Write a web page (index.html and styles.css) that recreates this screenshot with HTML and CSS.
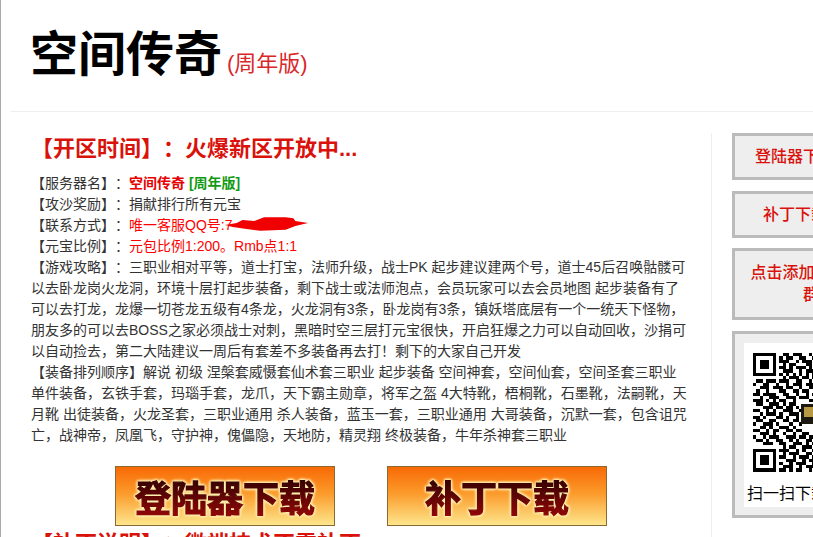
FILE: index.html
```html
<!DOCTYPE html>
<html lang="zh-CN">
<head>
    <meta charset="UTF-8">
    <meta name="viewport" content="width=device-width, initial-scale=1.0">
    <title>空间传奇(周年版)</title>
    <link rel="stylesheet" href="styles.css">
</head>
<body>
    <div class="page">
        <header class="top">
            <h1>空间传奇<small>(周年版)</small></h1>
        </header>

        <div class="columns">
            <main class="content">
                <h2>【开区时间】：火爆新区开放中...</h2>
                <p class="info">
                    【服务器名】：<b class="red">空间传奇</b> <b class="green">[周年版]</b><br>
                    【攻沙奖励】：捐献排行所有元宝<br>
                    【联系方式】：<span class="red">唯一客服QQ号:<span class="smear">7·········4<svg viewBox="0 0 86 14" width="84" height="14"><path d="M0 8 L12 6 L18 3 L30 4 L40 0 L62 0 L70 1 L72 4 L85 6 L72 9 L62 13 L36 14 L22 12 L8 10 Z" fill="#f00000"/></svg></span></span><br>
                    【元宝比例】：<span class="red">元包比例1:200。Rmb点1:1</span><br>
                    【游戏攻略】：三职业相对平等，道士打宝，法师升级，战士PK 起步建议建两个号，道士45后召唤骷髅可以去卧龙岗火龙洞，环境十层打起步装备，剩下战士或法师泡点，会员玩家可以去会员地图 起步装备有了可以去打龙，龙爆一切苍龙五级有4条龙，火龙洞有3条，卧龙岗有3条，镇妖塔底层有一个一统天下怪物，朋友多的可以去BOSS之家必须战士对刺，黑暗时空三层打元宝很快，开启狂爆之力可以自动回收，沙捐可以自动捡去，第二大陆建议一周后有套差不多装备再去打！剩下的大家自己开发<br>
                    【装备排列顺序】解说 初级 涅槃套威慑套仙术套三职业 起步装备 空间神套，空间仙套，空间圣套三职业 单件装备，玄铁手套，玛瑙手套，龙爪，天下霸主勋章，将军之盔 4大特靴，梧桐靴，石墨靴，法嗣靴，天月靴 出徒装备，火龙圣套，三职业通用 杀人装备，蓝玉一套，三职业通用 大哥装备，沉默一套，包含诅咒亡，战神帝，凤凰飞，守护神，傀儡隐，天地防，精灵翔 终极装备，牛年杀神套三职业
                </p>
                <div class="downloads">
                    <a class="dl-btn" href="#"><span>登陆器下载</span></a>
                    <a class="dl-btn" href="#"><span>补丁下载</span></a>
                </div>
                <h2 class="next">【补丁说明】：微端技术不需补丁</h2>
            </main>

            <aside class="side">
                <a class="side-card" href="#">登陆器下载地址</a>
                <a class="side-card" href="#">补丁下载地址</a>
                <a class="side-card tall" href="#">点击添加游戏QQ群</a>
                <div class="side-card qr-card">
                    <div class="qr">
                        <svg viewBox="0 0 37 37" width="122" height="122" shape-rendering="crispEdges">
                            <path fill="none" stroke="#000" stroke-width="1" d="M0 .5h7M9 .5h2M12 .5h3M17 .5h1M19 .5h3M0 1.5h1M6 1.5h1M8 1.5h1M10 1.5h2M14 1.5h2M18 1.5h3M0 2.5h1M2 2.5h3M6 2.5h1M8 2.5h3M13 2.5h1M15 2.5h3M20 2.5h2M0 3.5h1M2 3.5h3M6 3.5h1M9 3.5h1M11 3.5h2M16 3.5h2M19 3.5h2M0 4.5h1M2 4.5h3M6 4.5h1M8 4.5h2M11 4.5h1M13 4.5h3M17 4.5h1M20 4.5h2M0 5.5h1M6 5.5h1M9 5.5h3M14 5.5h1M16 5.5h3M0 6.5h7M8 6.5h1M10 6.5h1M12 6.5h1M14 6.5h1M16 6.5h1M18 6.5h1M20 6.5h1M9 7.5h1M11 7.5h3M15 7.5h2M18 7.5h3M1 8.5h2M4 8.5h3M8 8.5h3M13 8.5h2M17 8.5h1M19 8.5h2M0 9.5h1M3 9.5h2M7 9.5h1M10 9.5h1M12 9.5h3M16 9.5h3M2 10.5h3M6 10.5h3M10 10.5h2M14 10.5h1M17 10.5h2M20 10.5h1M1 11.5h1M4 11.5h1M8 11.5h2M12 11.5h2M15 11.5h2M19 11.5h2M0 12.5h2M3 12.5h4M9 12.5h2M13 12.5h1M16 12.5h1M18 12.5h1M2 13.5h1M5 13.5h3M10 13.5h3M14 13.5h3M19 13.5h2M0 14.5h3M4 14.5h1M6 14.5h1M8 14.5h2M12 14.5h1M17 14.5h2M1 15.5h2M5 15.5h3M9 15.5h1M11 15.5h2M3 16.5h3M7 16.5h2M10 16.5h2M13 16.5h1M0 17.5h2M4 17.5h1M6 17.5h1M9 17.5h3M14 17.5h1M2 18.5h1M4 18.5h3M8 18.5h1M11 18.5h3M0 19.5h2M3 19.5h1M7 19.5h2M10 19.5h1M13 19.5h1M1 20.5h2M5 20.5h2M9 20.5h2M12 20.5h2M0 21.5h1M3 21.5h3M7 21.5h1M11 21.5h1M14 21.5h1M2 22.5h2M5 22.5h1M8 22.5h3M12 22.5h1M0 23.5h2M4 23.5h1M6 23.5h2M10 23.5h2M13 23.5h2M2 24.5h3M6 24.5h1M9 24.5h1M12 24.5h1M15 24.5h2M19 24.5h2M0 25.5h1M3 25.5h1M5 25.5h3M10 25.5h3M14 25.5h2M17 25.5h3M1 26.5h2M4 26.5h1M7 26.5h2M11 26.5h1M13 26.5h1M16 26.5h2M20 26.5h2M3 27.5h3M8 27.5h2M12 27.5h3M16 27.5h1M18 27.5h3M9 28.5h1M11 28.5h2M15 28.5h3M20 28.5h1M0 29.5h7M8 29.5h3M13 29.5h1M15 29.5h1M18 29.5h2M0 30.5h1M6 30.5h1M9 30.5h1M11 30.5h3M16 30.5h2M20 30.5h2M0 31.5h1M2 31.5h3M6 31.5h1M8 31.5h2M12 31.5h1M14 31.5h3M18 31.5h1M0 32.5h1M2 32.5h3M6 32.5h1M10 32.5h3M15 32.5h1M17 32.5h3M0 33.5h1M2 33.5h3M6 33.5h1M8 33.5h1M11 33.5h1M13 33.5h3M18 33.5h2M0 34.5h1M6 34.5h1M9 34.5h3M14 34.5h1M16 34.5h3M20 34.5h1M0 35.5h7M8 35.5h2M11 35.5h1M13 35.5h2M17 35.5h1M19 35.5h2"/>
                            <rect x="14.5" y="15.5" width="7" height="6" fill="#1c1a10"/>
                            <rect x="15.5" y="16.5" width="5" height="3" fill="#b89a44"/>
                        </svg>
                        <p>扫一扫下载登陆器</p>
                    </div>
                </div>
            </aside>
        </div>
    </div>
</body>
</html>
```

FILE: styles.css
```css
html, body {
    height: 100%;
    overflow: hidden;
}
body {
    margin: 0;
    font-family: "Liberation Sans", "Noto Sans CJK SC", Arial, sans-serif;
    font-size: 14px;
    color: #333;
    background: #fff;
    text-spacing-trim: space-all;
}
.page {
    width: 1000px;
    border-left: 1px solid #aaa;
}
.top {
    margin-left: 10px;
    padding: 24px 19px 17px;
    border-bottom: 1px solid #eee;
}
.top h1 {
    margin: 0;
    font-size: 48px;
    line-height: 61px;
    color: #000;
}
.top small {
    margin-left: 5px;
    font-size: 22px;
    font-weight: normal;
    color: #d9282a;
}
.columns {
    display: flex;
    margin-top: 21px;
}
.content {
    flex: none;
    width: 656px;
    margin-left: 10px;
    padding: 0 24px 0 20px;
    border-right: 1px solid #eee;
}
.content h2 {
    margin: 0;
    padding-top: 1px;
    font-size: 22px;
    line-height: 30px;
    color: #d9120c;
}
.info {
    margin: 9px 0 0;
    line-height: 21px;
}
.red {
    color: #f00;
}
.green {
    color: #139a13;
}
.info b.red {
    color: #e60000;
}
.smear {
    position: relative;
    display: inline-block;
    width: 84px;
    white-space: nowrap;
}
.smear svg {
    position: absolute;
    left: 0;
    top: 2px;
}
.downloads {
    display: flex;
    gap: 52px;
    margin: 20px 0 0 84px;
}
.dl-btn {
    display: flex;
    align-items: center;
    justify-content: center;
    width: 220px;
    height: 60px;
    box-sizing: border-box;
    border: 1px solid #8a6a30;
    background: linear-gradient(#f86a06, #fb9a2a 45%, #fde68c);
    font-size: 36px;
    font-weight: bold;
    text-decoration: none;
}
.dl-btn span {
    background: linear-gradient(#1c0000, #a00808);
    -webkit-background-clip: text;
    background-clip: text;
    color: transparent;
    -webkit-text-stroke: 1.2px transparent;
    filter: drop-shadow(0 0 1px #fff0b0) drop-shadow(0 0 1px #fff0b0) drop-shadow(0 0 1px #fff0b0);
}
.content h2.next {
    margin-top: 2px;
}
.side {
    flex: none;
    width: 158px;
    margin-left: 20px;
    display: flex;
    flex-direction: column;
    gap: 10.5px;
}
.side-card {
    display: block;
    box-sizing: border-box;
    height: 47px;
    padding: 10px 14px;
    border: 3px solid #bbb;
    background: #eee;
    color: #d9120c;
    font-size: 16px;
    font-weight: 500;
    line-height: 21px;
    text-align: center;
    text-decoration: none;
}
.tall {
    height: 72px;
    padding-top: 11px;
    line-height: 22px;
}
.qr-card {
    height: 187px;
    padding: 9px;
}
.qr {
    box-sizing: border-box;
    height: 164px;
    padding-top: 10px;
    background: #fff;
}
.qr svg {
    display: block;
    margin-left: 9px;
}
.qr p {
    margin: 8px 0 0;
    color: #000;
    font-weight: normal;
    white-space: nowrap;
}
```
